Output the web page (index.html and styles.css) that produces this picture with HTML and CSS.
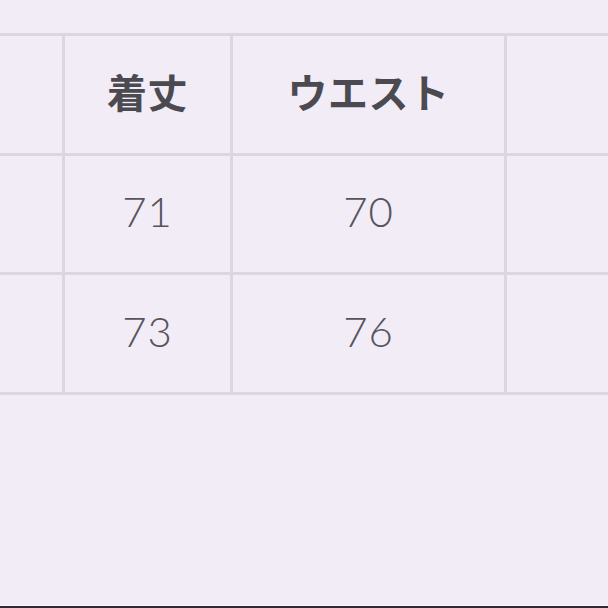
FILE: index.html
```html
<!DOCTYPE html>
<html lang="ja">
<head>
<meta charset="utf-8">
<link rel="stylesheet" href="styles.css">
</head>
<body>
<div class="page">
  <div class="sheet">
    <div class="size-table">
      <div class="cell head c0">ウエスト</div>
      <div class="cell head c1">着丈</div>
      <div class="cell head c2">ウエスト</div>
      <div class="cell head c3"></div>

      <div class="cell num c0"></div>
      <div class="cell num c1">71</div>
      <div class="cell num c2">70</div>
      <div class="cell num c3"></div>

      <div class="cell num c0"></div>
      <div class="cell num c1">73</div>
      <div class="cell num c2">76</div>
      <div class="cell num c3"></div>
    </div>
  </div>
  <div class="bottom-bar"></div>
</div>
</body>
</html>
```
FILE: styles.css
```css
html, body {
  margin: 0;
  padding: 0;
  height: 100%;
  overflow: hidden;
  background: #f2ecf7;
}

.page {
  display: flex;
  flex-direction: column;
  height: 100vh;
}

.sheet {
  padding-top: 33px;
  overflow: hidden;
  flex: 1;
}

.size-table {
  display: grid;
  grid-template-columns: 280px 168px 274px 170px;
  grid-auto-rows: 119.5px;
  margin-left: -215px;
  width: 892px;
  border-top: 3px solid #dbd7df;
}

.cell {
  display: flex;
  align-items: center;
  justify-content: center;
  border-right: 3px solid #dbd7df;
  border-bottom: 3px solid #dbd7df;
  color: #4b4a50;
}

.head {
  font-family: "Noto Sans CJK JP", "Noto Sans", sans-serif;
  font-weight: 700;
  font-size: 40px;
  letter-spacing: 0.5px;
  padding-bottom: 6px;
}

.num {
  font-family: Lato, "Noto Sans", sans-serif;
  font-weight: 300;
  font-size: 42px;
  color: #57555c;
  letter-spacing: 1px;
  padding-bottom: 5px;
}

.bottom-bar {
  height: 2px;
  background: #2e2c33;
  border-top: 1px solid #f8f5fb;
}
```
